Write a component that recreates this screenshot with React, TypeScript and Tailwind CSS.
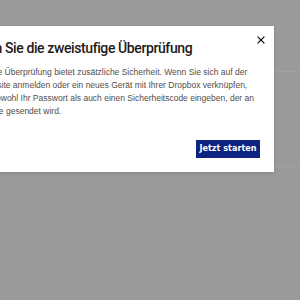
export default function App() {
  return (
    <div className="relative h-[300px] w-[300px] overflow-hidden bg-[#9a9a9a]">
      {/* dimmed page behind the dialog */}
      <div className="flex h-full flex-col">
        <div className="h-[72px] border-b border-[#a1a1a1]" />
        <div className="h-[95px] border-b border-[#a1a1a1]" />
        <div className="h-[72px] border-b border-[#9d9d9d]" />
        <div className="h-[50px] border-b border-[#9d9d9d]" />
      </div>

      <div className="absolute inset-0 pt-[26px]">
        <div className="ml-[-80px] w-[354px] bg-white pl-[25px] pr-[14px] pt-[14px] pb-[14px] shadow-[0_1px_3px_rgba(0,0,0,0.15)]">
          <div className="flex items-start justify-between">
            <h2 className="ml-[-2px] whitespace-nowrap font-['Roboto',sans-serif] text-[14px] font-medium leading-[17px] tracking-[-0.4px] text-[#1e1919]">
              Aktivieren Sie die zweistufige Überprüfung
            </h2>
            <button className="mt-[-7px] mr-[-8px] flex h-[14px] w-[14px] items-center justify-center text-black">
              <svg width="8" height="8" viewBox="0 0 8 8" fill="none" stroke="currentColor" strokeWidth="1.2">
                <path d="M0.6 0.6 L7.4 7.4 M7.4 0.6 L0.6 7.4" />
              </svg>
            </button>
          </div>

          <p className="mt-[9px] whitespace-nowrap font-['Liberation_Sans',Arial,sans-serif] text-[8.5px] leading-[13px] text-[#524e4b]">
            Die zweistufige Überprüfung bietet zusätzliche Sicherheit. Wenn Sie sich auf der
            <br />
            Dropbox-Website anmelden oder ein neues Gerät mit Ihrer Dropbox verknüpfen,
            <br />
            müssen Sie sowohl Ihr Passwort als auch einen Sicherheitscode eingeben, der an
            <br />
            Ihr Smartphone gesendet wird.
          </p>

          <div className="mt-[22px] flex justify-end">
            <button className="h-[18px] w-[64px] bg-[#0d2481] font-['Liberation_Sans_Narrow','DejaVu_Sans_Condensed',sans-serif] text-[9px] font-bold text-white">
              Jetzt starten
            </button>
          </div>
        </div>
      </div>
    </div>
  );
}
